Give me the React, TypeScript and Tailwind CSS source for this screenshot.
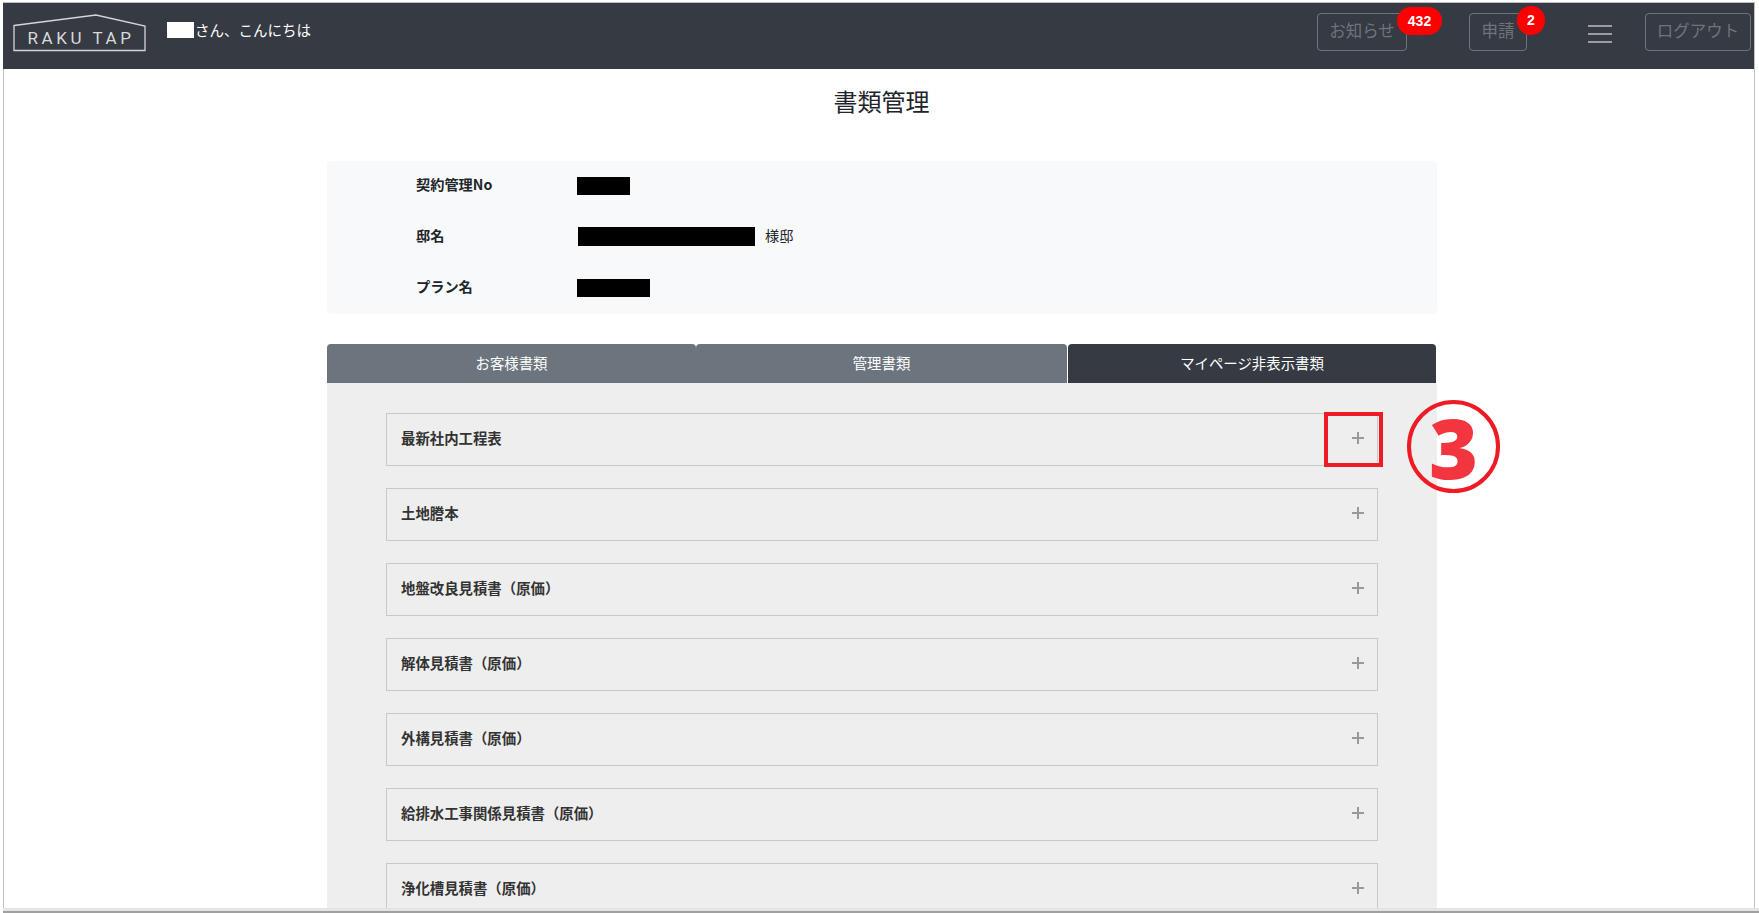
const font = { fontFamily: '"Noto Sans CJK JP", "Noto Sans", sans-serif' };

const documents = [
  "最新社内工程表",
  "土地謄本",
  "地盤改良見積書（原価）",
  "解体見積書（原価）",
  "外構見積書（原価）",
  "給排水工事関係見積書（原価）",
  "浄化槽見積書（原価）",
];

function Logo() {
  return (
    <div className="relative w-[134px] h-[38px] ml-[10px] mb-[6px] shrink-0">
      <svg width="134" height="38" viewBox="0 0 134 38" className="block">
        <polygon points="1,11.5 83,1 132,12 132,36.5 1,36.5" fill="none" stroke="#d4d5d7" strokeWidth="1.3" />
      </svg>
      <span className="absolute left-0 right-0 top-[13px] pl-[2px] text-center text-[17px] leading-[22px] tracking-[3.6px] text-[#d8d9db]" style={{ fontFamily: "Roboto, sans-serif", fontWeight: 400 }}>
        RAKU TAP
      </span>
    </div>
  );
}

function HeaderButton({ label, badge, width, badgeClass }: { label: string; badge?: string; width: string; badgeClass?: string }) {
  return (
    <div className={`relative h-[38px] border border-[#6c757d] rounded-[4px] flex items-center justify-center text-[16.5px] text-[#6c757d] ${width}`}>
      <span className="mb-[3px]">{label}</span>
      {badge && (
        <span className={`absolute h-[28px] rounded-full bg-[#ff0000] text-white text-[14px] font-bold flex items-center justify-center ${badgeClass}`} style={{ fontFamily: '"Liberation Sans", sans-serif' }}>
          {badge}
        </span>
      )}
    </div>
  );
}

function Header() {
  return (
    <header className="h-[66px] bg-[#363a42] flex items-center">
      <Logo />
      <div className="flex items-center ml-[20px] mb-[12px] text-white text-[14.5px]">
        <span className="w-[27px] h-[16px] bg-white mr-[1px]"></span>
        さん、こんにちは
      </div>
      <div className="ml-auto flex items-center pr-[3px] mb-[8px]">
        <HeaderButton label="お知らせ" badge="432" width="w-[90px]" badgeClass="w-[45px] left-[79px] -top-[7px]" />
        <HeaderButton label="申請" badge="2" width="w-[58px] ml-[62px]" badgeClass="w-[28px] h-[29px] left-[47px] -top-[8px]" />
        <div className="ml-[61px] w-[24px] flex flex-col gap-[6px] mt-[3px]">
          <span className="block h-[2px] bg-[#9a9da0]"></span>
          <span className="block h-[2px] bg-[#9a9da0]"></span>
          <span className="block h-[2px] bg-[#9a9da0]"></span>
        </div>
        <HeaderButton label="ログアウト" width="w-[106px] ml-[33px]" />
      </div>
    </header>
  );
}

function InfoRow({ label, blockClass, suffix }: { label: string; blockClass: string; suffix?: string }) {
  return (
    <div className="h-[51px] flex items-center">
      <div className="w-[250px] pl-[89px] mb-[3px] text-[14.2px] font-bold text-[#212529]">{label}</div>
      <span className={`bg-black mb-[2px] ${blockClass}`}></span>
      {suffix && <span className="ml-[10px] mb-[4px] text-[14.2px] text-[#212529]">{suffix}</span>}
    </div>
  );
}

function DocumentRow({ name }: { name: string }) {
  return (
    <div className="h-[53px] shrink-0 border border-[#c8c8c8] flex items-center justify-between pl-[14px] pr-[13px]">
      <span className="text-[14.4px] font-bold text-[#333333] mb-[3px]">{name}</span>
      <svg width="12" height="12" viewBox="0 0 12 12" className="mb-[4px]">
        <path d="M0 6H12M6 0V12" stroke="#999999" strokeWidth="2" />
      </svg>
    </div>
  );
}

export default function App() {
  return (
    <div className="relative w-[1759px] h-[913px] bg-white overflow-hidden pt-[2px] pl-[3px]" style={font}>
      <div className="w-[1752px] h-[906px] border-r border-t border-[#c0c0c0] overflow-hidden">
        <Header />
        <div className="h-[840px] border-l border-[#c0c0c0]">
          <div className="h-[92px] pt-[14px] pl-[5px] text-center text-[24px] leading-[36px] text-[#212529]">書類管理</div>
          <div className="ml-[323px] w-[1110px]">
            <div className="h-[153px] bg-[#f8f9fa] rounded-[4px]">
              <InfoRow label="契約管理No" blockClass="w-[53px] h-[18px]" />
              <InfoRow label="邸名" blockClass="w-[177px] h-[19px] ml-[1px]" suffix="様邸" />
              <InfoRow label="プラン名" blockClass="w-[73px] h-[18px]" />
            </div>
            <div className="mt-[30px] flex h-[39px] text-[14.4px] text-white">
              <div className="w-[369px] bg-[#6c757d] rounded-t-[4px] flex items-center justify-center pb-[2px]">お客様書類</div>
              <div className="w-[371px] bg-[#6c757d] rounded-t-[4px] flex items-center justify-center pb-[2px]">管理書類</div>
              <div className="w-[368px] ml-[1px] bg-[#363a42] rounded-t-[4px] flex items-center justify-center pb-[2px]">マイページ非表示書類</div>
            </div>
            <div className="h-[530px] bg-[#eeeeee] pt-[30px] px-[59px] flex flex-col gap-[22px] overflow-hidden">
              {documents.map((name) => (
                <DocumentRow key={name} name={name} />
              ))}
            </div>
          </div>
        </div>
      </div>
      <div className="h-[3px] bg-[#e4e4e4]"></div>
      <div className="h-[2px] bg-[#a0a0a0]"></div>

      {/* manual annotation on top of the screenshot */}
      <div className="absolute left-[1324px] top-[412px] w-[59px] h-[55px] border-[4px] border-[#ed1c24]"></div>
      <div className="absolute left-[1407px] top-[400px] w-[93px] h-[93px] rounded-full border-[4px] border-[#ed1c24] flex items-center justify-center">
        <span className="text-[84px] leading-none font-extrabold text-[#f2353f]" style={{ fontFamily: '"Open Sans", sans-serif' }}>3</span>
      </div>
    </div>
  );
}
